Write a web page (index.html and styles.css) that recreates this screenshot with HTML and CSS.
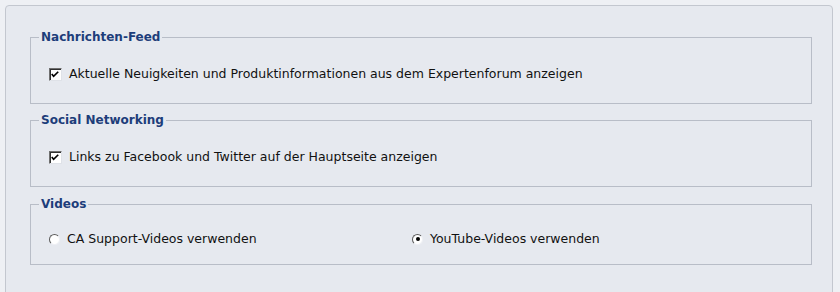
FILE: index.html
```html
<!DOCTYPE html>
<html lang="de">
<head>
<meta charset="utf-8">
<link rel="stylesheet" href="styles.css">
</head>
<body>
<div class="panel">
  <fieldset class="group g1">
    <legend>Nachrichten-Feed</legend>
    <label class="row"><span class="cb"><svg viewBox="0 0 13 13" width="13" height="13"><path d="M3 6 L5 8.5 L10 3.5" fill="none" stroke="#000" stroke-width="1.8"/></svg></span>Aktuelle Neuigkeiten und Produktinformationen aus dem Expertenforum anzeigen</label>
  </fieldset>
  <fieldset class="group g2">
    <legend>Social Networking</legend>
    <label class="row"><span class="cb"><svg viewBox="0 0 13 13" width="13" height="13"><path d="M3 6 L5 8.5 L10 3.5" fill="none" stroke="#000" stroke-width="1.8"/></svg></span>Links zu Facebook und Twitter auf der Hauptseite anzeigen</label>
  </fieldset>
  <fieldset class="group g3">
    <legend>Videos</legend>
    <div class="radios">
      <label class="row"><span class="rb"></span>CA Support-Videos verwenden</label>
      <label class="row"><span class="rb on"></span>YouTube-Videos verwenden</label>
    </div>
  </fieldset>
</div>
</body>
</html>
```
FILE: styles.css
```css
html, body {
  margin: 0;
  padding: 0;
  background: #eef0f4;
  font-family: "DejaVu Sans", Verdana, sans-serif;
  font-size: 12.5px;
  color: #111;
}
.panel {
  margin: 5px 0 0 5px;
  width: 828px;
  height: 300px;
  border: 1px solid #c3c7cf;
  border-radius: 4px 4px 0 0;
  background: #e6e9ef;
  padding: 24px 0 0 24px;
  box-sizing: border-box;
}
.group {
  width: 782px;
  box-sizing: border-box;
  margin: 0;
  border: 1px solid #b8bdc7;
  padding: 22px 0 21px 18px;
}
.g2 { margin-top: 9px; }
.g3 { margin-top: 10px; padding-top: 20px; padding-bottom: 17px; }
legend {
  margin-left: -10px;
  padding: 0 2px;
  font-weight: bold;
  font-size: 12px;
  color: #1d3d7a;
  line-height: 14px;
}
.row {
  display: flex;
  align-items: center;
  height: 16px;
  line-height: 16px;
  white-space: nowrap;
}
.cb {
  width: 13px;
  height: 13px;
  box-sizing: border-box;
  background: #fff;
  border-top: 1px solid #6f6f6f;
  border-left: 1px solid #6f6f6f;
  border-right: 1px solid #dfe2e8;
  border-bottom: 1px solid #dfe2e8;
  box-shadow: inset 1px 1px 0 #303030;
  margin-right: 7px;
  display: flex;
}
.cb svg { margin: -1px 0 0 -1px; }
.radios {
  display: grid;
  grid-template-columns: 363px auto;
}
.rb {
  width: 11px;
  height: 11px;
  box-sizing: border-box;
  border-radius: 50%;
  background: #fff;
  border: 1px solid;
  border-color: #5a5a5a #eef0f4 #eef0f4 #5a5a5a;
  margin-right: 7px;
  display: flex;
  align-items: center;
  justify-content: center;
}
.rb.on::after {
  content: "";
  width: 4px;
  height: 4px;
  border-radius: 50%;
  background: #000;
}
```
